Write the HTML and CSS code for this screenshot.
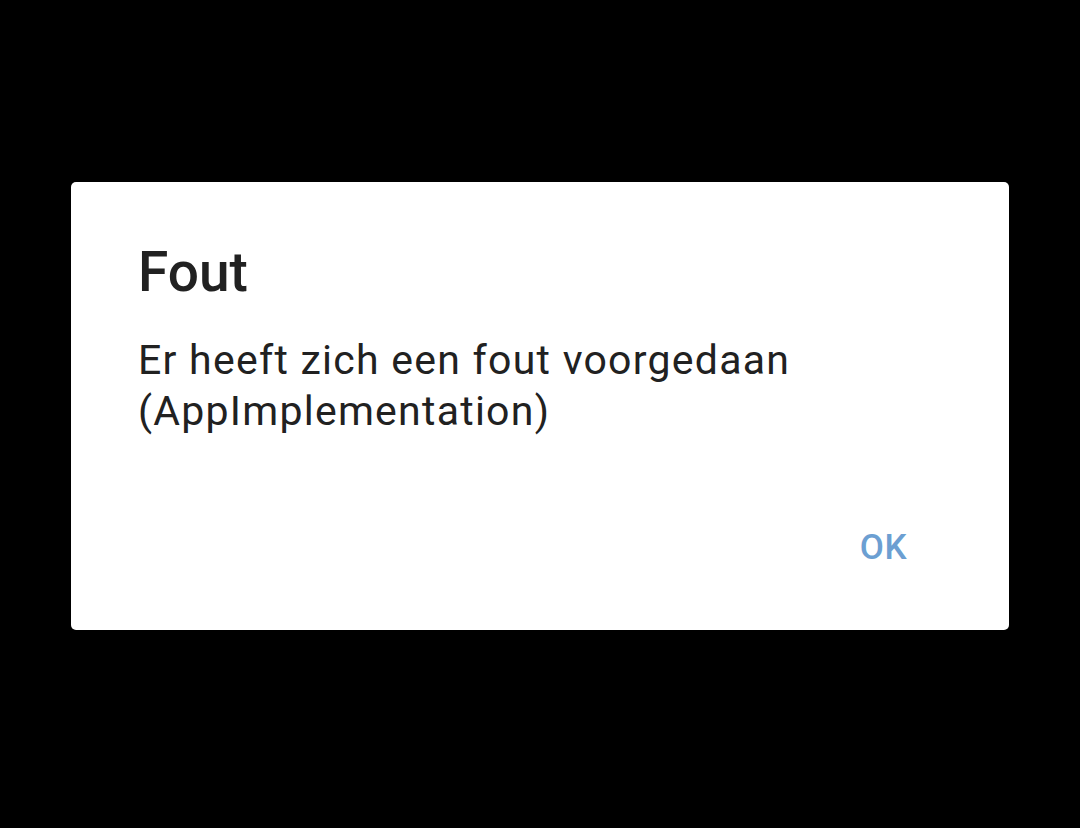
FILE: index.html
```html
<!DOCTYPE html>
<html>
<head>
<meta charset="utf-8">
<link rel="stylesheet" href="styles.css">
</head>
<body>
<div class="screen">
  <div class="dialog">
    <div class="title">Fout</div>
    <div class="message">Er heeft zich een fout voorgedaan<br>(AppImplementation)</div>
    <div class="actions">
      <span class="btn">OK</span>
    </div>
  </div>
</div>
</body>
</html>
```
FILE: styles.css
```css
html, body {
  margin: 0;
  padding: 0;
  background: #000;
}
.screen {
  width: 1080px;
  height: 828px;
  padding-top: 182px;
  box-sizing: border-box;
  display: flex;
  justify-content: center;
  align-items: flex-start;
  font-family: Roboto, "Noto Sans", sans-serif;
}
.dialog {
  width: 938px;
  height: 448px;
  box-sizing: border-box;
  background: #fff;
  border-radius: 5px;
  padding: 57px 0 0 67px;
  display: flex;
  flex-direction: column;
}
.title {
  font-size: 55px;
  line-height: 66px;
  font-weight: 500;
  color: #212121;
}
.message {
  margin-top: 30px;
  font-size: 41px;
  line-height: 51px;
  letter-spacing: 1.25px;
  color: #212121;
}
.actions {
  margin-top: 90px;
  display: flex;
  justify-content: flex-end;
  padding-right: 102px;
}
.btn {
  font-size: 35px;
  line-height: 42px;
  font-weight: 500;
  letter-spacing: 0.5px;
  color: #6c9fd2;
}
```
